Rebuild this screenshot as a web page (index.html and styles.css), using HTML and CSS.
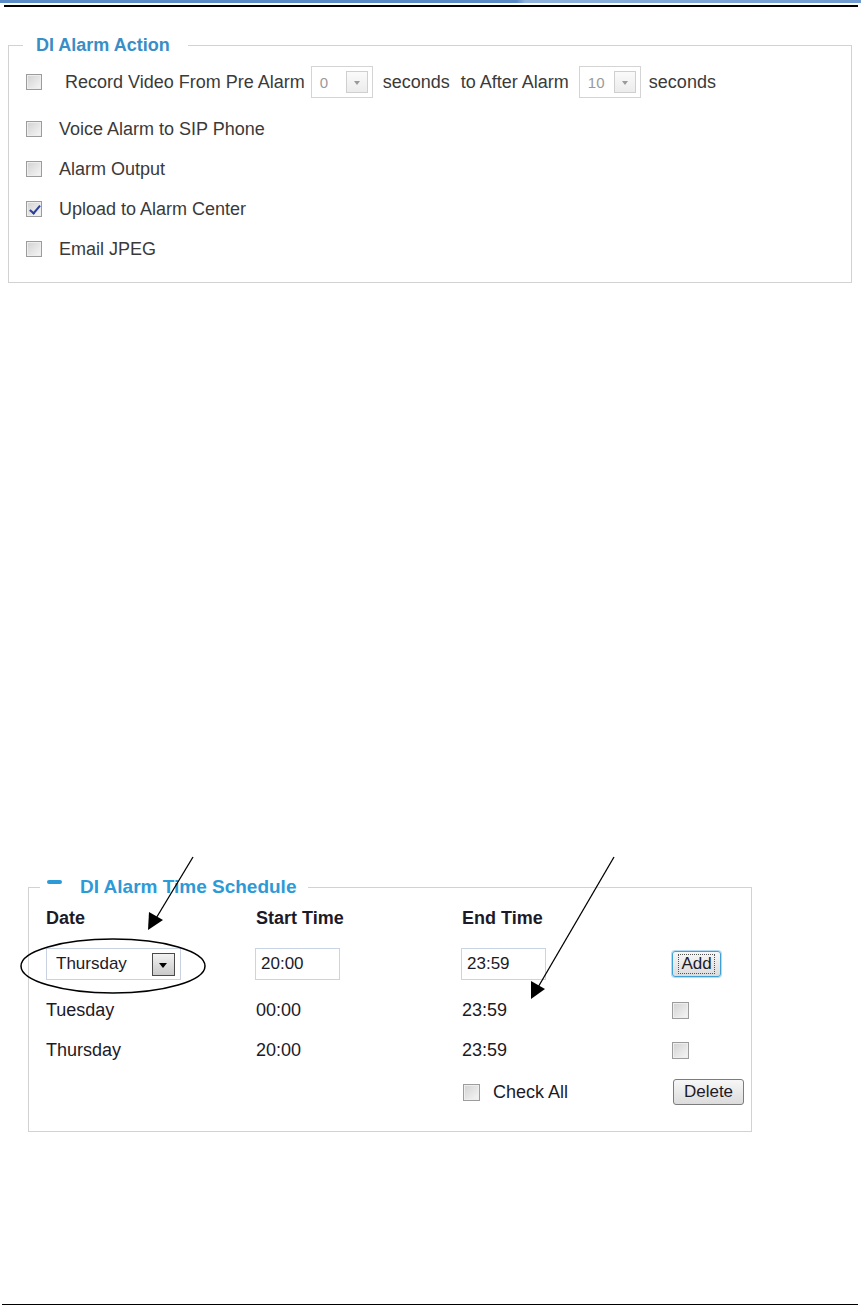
FILE: index.html
```
<!DOCTYPE html>
<html lang="en">
<head>
  <meta charset="UTF-8" />
  <title>DI Alarm Settings</title>
  <link rel="stylesheet" href="styles.css">
</head>
<body>
<div class="page">

  <!-- header rules of the manual page -->
  <div class="top-band"></div>
  <div class="top-rule"></div>

  <fieldset class="panel action-panel">
    <legend>DI Alarm Action</legend>

    <div class="opt-row first">
      <span class="chk"></span>
      <span class="lbl wide">Record Video From Pre Alarm</span>
      <span class="mini-select"><span class="val">0</span><span class="mini-arrow"></span></span>
      <span class="lbl">seconds</span>
      <span class="lbl after">to After Alarm</span>
      <span class="mini-select"><span class="val">10</span><span class="mini-arrow"></span></span>
      <span class="lbl">seconds</span>
    </div>
    <div class="opt-row"><span class="chk"></span><span class="lbl">Voice Alarm to SIP Phone</span></div>
    <div class="opt-row"><span class="chk"></span><span class="lbl">Alarm Output</span></div>
    <div class="opt-row"><span class="chk checked"></span><span class="lbl">Upload to Alarm Center</span></div>
    <div class="opt-row"><span class="chk"></span><span class="lbl">Email JPEG</span></div>
  </fieldset>

  <fieldset class="panel sched-panel">
    <legend><span class="dash"></span>DI Alarm Time Schedule</legend>

    <div class="sched-row head">
      <span>Date</span><span>Start Time</span><span>End Time</span><span></span>
    </div>

    <div class="sched-row edit">
      <span class="day-select">Thursday<span class="day-arrow"></span></span>
      <span class="time-input">20:00</span>
      <span class="time-input">23:59</span>
      <span class="btn add"><span class="focus-ring">Add</span></span>
    </div>

    <div class="sched-row item">
      <span>Tuesday</span><span>00:00</span><span>23:59</span><span class="chk big"></span>
    </div>
    <div class="sched-row item">
      <span>Thursday</span><span>20:00</span><span>23:59</span><span class="chk big"></span>
    </div>

    <div class="sched-row foot">
      <span></span><span></span>
      <span class="check-all"><span class="chk big"></span>Check All</span>
      <span class="btn del">Delete</span>
    </div>
  </fieldset>

  <div class="bottom-rule"></div>

  <!-- callout marks drawn over the screenshot -->
  <svg class="callouts" width="861" height="1306" viewBox="0 0 861 1306">
    <line x1="193" y1="857" x2="155" y2="920" stroke="#000" stroke-width="1.3"/>
    <polygon points="148,930 149,912 163,920" fill="#000"/>
    <line x1="614" y1="857" x2="537" y2="989" stroke="#000" stroke-width="1.3"/>
    <polygon points="531,999 531,981 545,989" fill="#000"/>
    <ellipse cx="113" cy="966" rx="92" ry="27" fill="none" stroke="#000" stroke-width="1.5"/>
  </svg>
</div>
</body>
</html>
```

FILE: styles.css
```
:root{
  --ink:#2e2e2e; --ink2:#1c1a28; --blue:#2d9ad8; --line:#d2d2d2;
}
body{margin:0;font-family:"Liberation Sans",Arial,sans-serif;color:var(--ink);background:#fff}
.page{position:relative;width:861px;height:1306px;display:flex;flex-direction:column;overflow:hidden}

.top-band{height:3px;background:linear-gradient(90deg,#5b8cc8 0%,#5a8ac6 60%,#8fb3dc 61%,#6f9bd0 100%)}
.top-rule{height:2px;background:#000;margin:2px 3px 0 4px}

.panel{margin:0;border:1px solid var(--line);min-width:0;box-sizing:border-box}
.panel legend{font-weight:bold;line-height:22px}

/* ---- DI Alarm Action ---- */
.action-panel{margin:27px 0 0 8px;width:844px;padding:6px 0 13px 18px}
.action-panel legend{color:#3a8ec6;font-size:18px;padding:0 18px 0 13px;margin-left:-4px}
.opt-row{display:flex;align-items:center;height:40px;font-size:18px}
.opt-row.first{margin-bottom:7px}
.opt-row .chk{margin-left:-1px;margin-right:17px}
.opt-row .lbl.wide{margin-left:6px}
.opt-row .lbl{color:#3a3a3a;white-space:pre}
.opt-row.first .lbl{margin-right:6px}
.opt-row.first .lbl.after{margin-left:5px;margin-right:10px}

.mini-select{display:inline-flex;align-items:center;box-sizing:border-box;width:62px;height:32px;
  border:1px solid #d4d4d4;padding-left:8px;margin-right:8px;font-size:15px;color:#9a9a9a}
.opt-row.first .lbl.wide + .mini-select{margin-right:10px}
.mini-select .val{flex:1}
.mini-arrow{width:22px;height:22px;box-sizing:border-box;border:1px solid #cfcfcf;margin-right:4px;
  background:linear-gradient(#fafafa,#ececec);position:relative}
.mini-arrow::after{content:"";position:absolute;left:7px;top:9px;border:3px solid transparent;border-top:4px solid #9a9a9a}

.chk{display:inline-block;box-sizing:border-box;width:16px;height:16px;border:1px solid #9c9c9c;
  background:linear-gradient(135deg,#d2d2d2,#f6f6f6);box-shadow:inset 0 0 0 1px #eeeeee;position:relative;flex:none}
.chk.big{width:17px;height:17px}
.chk.checked::after{content:"";position:absolute;left:5px;top:1px;width:4px;height:9px;
  border:solid #2a3f9a;border-width:0 2px 2px 0;transform:rotate(40deg)}

/* ---- DI Alarm Time Schedule ---- */
.sched-panel{margin:593px 0 0 28px;width:724px;padding:5px 0 17px 17px;color:var(--ink2)}
.sched-panel legend{color:var(--blue);font-size:19px;padding:0 12px 0 7px;margin-left:-6px;display:flex;align-items:center}
.dash{display:inline-block;width:15px;height:4px;border-radius:2px;background:var(--blue);margin:-10px 18px 0 0}

.sched-row{display:grid;grid-template-columns:210px 206px 210px auto;align-items:center;font-size:18px}
.sched-row.head{height:30px;font-weight:bold}
.sched-row.edit{height:32px;margin-top:15px;margin-bottom:10px}
.sched-row.item{height:40px}
.sched-row.foot{height:44px}

.day-select{display:flex;align-items:center;box-sizing:border-box;width:135px;height:32px;
  border:1px solid #c9d2e2;padding-left:9px;font-size:17px}
.day-arrow{margin-left:auto;margin-right:5px;width:23px;height:23px;box-sizing:border-box;
  border:1px solid #4a4a4a;background:linear-gradient(#f2f2f2,#c9c9c9);position:relative}
.day-arrow::after{content:"";position:absolute;left:6px;top:9px;border:4px solid transparent;border-top:5px solid #000}

.time-input{display:flex;align-items:center;box-sizing:border-box;width:85px;height:32px;
  border:1px solid #c9d4e6;padding-left:5px;font-size:17px;margin-left:-1px}

.btn{display:inline-flex;align-items:center;justify-content:center;box-sizing:border-box;height:26px;
  border-radius:3px;background:linear-gradient(#f7f7f7,#dcdcdc);font-size:17px}
.btn.add{width:49px;border:1px solid #3fa0d8;box-shadow:0 0 0 1px #b5dcf2}
.focus-ring{outline:1px dotted #555;padding:0 2px;line-height:18px}
.btn.del{width:71px;border:1px solid #7c7c7c;margin-left:1px}

.check-all{display:flex;align-items:center;gap:13px;margin-left:1px}

.bottom-rule{margin-top:auto;height:1px;background:#000;margin-left:2px;margin-right:3px;margin-bottom:1px}

.callouts{position:absolute;left:0;top:0;pointer-events:none}
```
